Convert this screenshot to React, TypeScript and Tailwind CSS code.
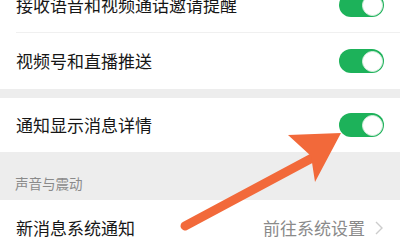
import React from 'react'

const FONT = { fontFamily: '"Noto Sans CJK SC", "Noto Sans", sans-serif' }

function Toggle() {
  return (
    <div className="relative h-[24px] w-[45px] rounded-full bg-[#1db25a]">
      <div className="absolute right-[1.5px] top-[1.5px] h-[21px] w-[21px] rounded-full border border-[#d9efe0] bg-white" />
    </div>
  )
}

function SwitchRow({ label, divider }: { label: string; divider?: boolean }) {
  return (
    <div className="relative flex h-[56px] items-center justify-between pl-[16px] pr-[16px]">
      <span className="text-[17px] text-[#161616]">{label}</span>
      <Toggle />
      {divider && <div className="absolute bottom-0 left-[16px] right-0 h-px bg-[#f0f0f0]" />}
    </div>
  )
}

export default function App() {
  return (
    <div className="relative h-[246px] w-[400px] overflow-hidden bg-white" style={FONT}>
      <div className="mt-[-23px] flex flex-col">
        <SwitchRow label="接收语音和视频通话邀请提醒" divider />
        <SwitchRow label="视频号和直播推送" />
        <div className="h-[9px] bg-[#ededed]" />
        <div className="flex h-[54px] items-center justify-between px-[16px]">
          <span className="text-[17px] text-[#161616]">通知显示消息详情</span>
          <Toggle />
        </div>
        <div className="flex h-[48px] items-end bg-[#ededed] px-[15px] pb-[7px]">
          <span className="text-[13.5px] text-[#8a8a8a]">声音与震动</span>
        </div>
        <div className="flex h-[56px] items-center justify-between pl-[16px] pr-[17px]">
          <span className="text-[17px] text-[#161616]">新消息系统通知</span>
          <div className="flex items-center gap-[10px]">
            <span className="text-[17px] text-[#8a8a8a]">前往系统设置</span>
            <svg width="8" height="14" viewBox="0 0 8 14" fill="none">
              <path d="M1 1l6 6-6 6" stroke="#cccccc" strokeWidth="1.4" />
            </svg>
          </div>
        </div>
      </div>

      {/* annotation arrow over the content */}
      <svg className="pointer-events-none absolute left-0 top-0" width="400" height="246" viewBox="0 0 400 246">
        <line x1="185" y1="226" x2="314" y2="157" stroke="#f2693a" strokeWidth="9" strokeLinecap="round" />
        <polygon points="288,135 341,133 315,182 311,156" fill="#f2693a" />
      </svg>
    </div>
  )
}
